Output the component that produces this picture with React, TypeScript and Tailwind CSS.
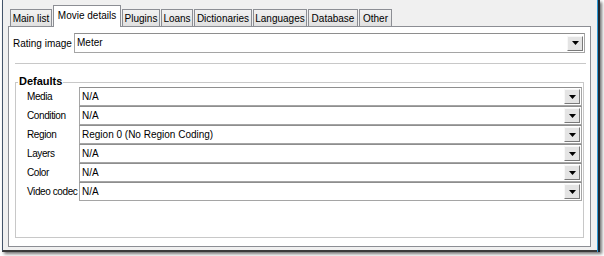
import React from 'react';

const tabs = [
  { label: 'Main list', w: 'w-[42px]' },
  { label: 'Movie details', w: 'w-[68px]', active: true },
  { label: 'Plugins', w: 'w-[38px]' },
  { label: 'Loans', w: 'w-[32px]' },
  { label: 'Dictionaries', w: 'w-[58px]' },
  { label: 'Languages', w: 'w-[54px]' },
  { label: 'Database', w: 'w-[50px]' },
  { label: 'Other', w: 'w-[33px]' },
];

const defaults = [
  { label: 'Media', value: 'N/A' },
  { label: 'Condition', value: 'N/A' },
  { label: 'Region', value: 'Region 0 (No Region Coding)' },
  { label: 'Layers', value: 'N/A' },
  { label: 'Color', value: 'N/A' },
  { label: 'Video codec', value: 'N/A' },
];

const Combo = ({ value, className }: { value: string; className?: string }) => (
  <div
    className={
      'flex items-center bg-white border border-[#a5a5a5] border-t-[#8e8e8e] pl-[2px] pr-[1px] ' +
      (className || '')
    }
  >
    <span className="flex-1 truncate leading-none">{value}</span>
    <div className="flex items-center justify-center w-[16px] h-[15px] bg-[#e4e4e4] border border-[#f8f8f8] border-r-[#7a7a7a] border-b-[#7a7a7a]">
      <svg width="7" height="4" viewBox="0 0 7 4">
        <path d="M0 0h7L3.5 4z" fill="#000" />
      </svg>
    </div>
  </div>
);

export default function App() {
  return (
    <div
      className="w-[604px] h-[256px] bg-white overflow-hidden text-[10px] text-black"
      style={{ fontFamily: '"Liberation Sans", Arial, sans-serif' }}
    >
      <div className="ml-[2px] w-[598px] h-[252px] flex shadow-[2px_2px_3px_rgba(0,0,0,0.55)]">
        <div className="flex-1 flex flex-col bg-[#f0f0f0] border-l border-[#44546a] border-b-2 border-b-[#3a3a3a] pl-[5px] pr-[6px] pt-[5px] pb-[3px]">
          {/* tab strip */}
          <div className="flex items-end gap-[1px] h-[22px] pl-[2px] -mb-px relative z-10">
            {tabs.map((t) =>
              t.active ? (
                <div
                  key={t.label}
                  className={t.w + ' h-[22px] bg-white border border-b-0 border-[#8c8e94] flex items-center justify-center pb-[2px]'}
                >
                  {t.label}
                </div>
              ) : (
                <div
                  key={t.label}
                  className={t.w + ' h-[18px] bg-gradient-to-b from-[#f2f2f2] to-[#e0e0e0] border border-[#8c8e94] flex items-center justify-center'}
                >
                  {t.label}
                </div>
              )
            )}
          </div>
          {/* panel */}
          <div className="flex-1 bg-white border border-[#8c8e94] pl-[4px] pr-[5px] pt-[6px] flex flex-col">
            <div className="flex items-center h-[20px]">
              <span className="w-[61px] whitespace-nowrap">Rating image</span>
              <Combo value="Meter" className="flex-1 h-[20px]" />
            </div>
            <div className="ml-[2px] mr-[-1px] mt-[10px] h-[2px] border-t border-[#c8c8c8] border-b border-b-white" />
            <fieldset className="relative ml-[2px] mr-[1px] mt-[17px] h-[156px] border border-[#c8c8c8] pl-[11px] pr-[1px] pt-[4px]">
              <span className="absolute left-[2px] top-[-7px] bg-white px-[1px] font-bold text-[11px] leading-none">
                Defaults
              </span>
              <div className="flex flex-col">
                {defaults.map((d) => (
                  <div key={d.label} className="flex items-center h-[19px]">
                    <span className="w-[52px] shrink-0 whitespace-nowrap tracking-[-0.4px]">{d.label}</span>
                    <Combo value={d.value} className="flex-1 h-[19px]" />
                  </div>
                ))}
              </div>
            </fieldset>
          </div>
        </div>
        <div className="w-[1px] bg-[#2f9ad6]" />
        <div className="w-[2px] bg-[#1e2833]" />
      </div>
    </div>
  );
}
